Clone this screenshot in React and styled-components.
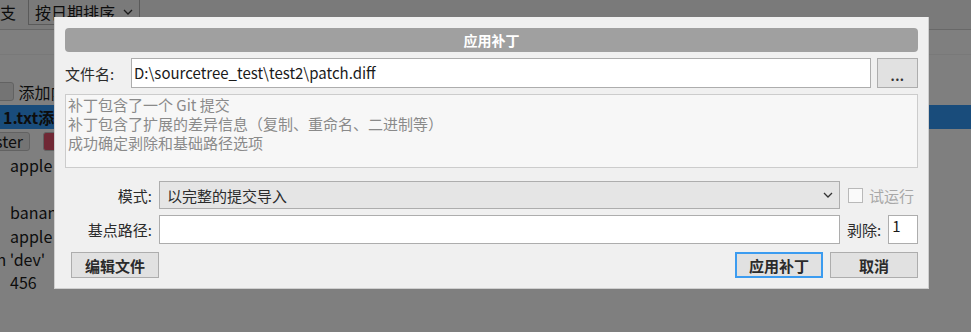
import React from 'react'
import styled, { createGlobalStyle } from 'styled-components'

const GlobalStyle = createGlobalStyle`
  html, body { margin: 0; padding: 0; background: #ffffff; }
  body { font-family: "Noto Sans CJK SC", "Noto Sans", sans-serif; }
`

const Screen = styled.div`
  position: relative;
  width: 971px;
  height: 332px;
  overflow: hidden;
  background: #ffffff;
  color: #1a1a1a;
  font-size: 16px;
`

// the app behind the modal
const Toolbar = styled.div`
  height: 29px;
  display: flex;
  align-items: flex-start;
  gap: 12px;
  background: #f4f4f4;
  border-bottom: 1px solid #d0d0d0;
  line-height: 25px;
  white-space: nowrap;
`

const SortBox = styled.div`
  margin-top: -1px;
  height: 26px;
  display: flex;
  align-items: center;
  gap: 8px;
  padding: 0 6px 0 6px;
  box-sizing: border-box;
  border: 1px solid #b4b4b4;
  background: #f4f4f4;
  white-space: nowrap;
`

const SubBar = styled.div`
  height: 24px;
  border-bottom: 1px solid #f2f2f2;
`

const List = styled.div`
  display: flex;
  flex-direction: column;
`

const Row = styled.div`
  height: ${p => p.$h || 23.6}px;
  display: flex;
  align-items: center;
  gap: 5px;
  padding-left: ${p => p.$indent || 0}px;
  background: ${p => (p.$selected ? '#3399f6' : 'transparent')};
  font-weight: ${p => (p.$selected ? 700 : 400)};
  white-space: nowrap;
`

const Pill = styled.span`
  display: inline-flex;
  align-items: center;
  height: 17px;
  padding: 0 6px 0 ${p => p.$pad || 6}px;
  margin-left: ${p => p.$offset || 0}px;
  border: 1px solid #c4c4c4;
  border-radius: 3px;
  background: ${p => p.$bg || '#e8e8e8'};
  color: #1a1a1a;
  font-size: 16px;
`

const Dim = styled.div`
  position: absolute;
  inset: 0;
  background: rgba(0, 0, 0, 0.5);
`

// modal dialog
const Dialog = styled.div`
  position: absolute;
  left: 54px;
  top: 17px;
  width: 875px;
  height: 272px;
  box-sizing: border-box;
  padding: 11px 10px 0;
  background: #f0f0f0;
  border: 1px solid #cfcfcf;
  border-top: 0;
  font-size: 15px;
  color: #2b2b2b;
  display: flex;
  flex-direction: column;
`

const TitleBar = styled.div`
  height: 24px;
  border-radius: 4px;
  background: #a0a0a0;
  color: #ffffff;
  font-weight: 700;
  font-size: 14px;
  display: flex;
  align-items: center;
  justify-content: center;
  margin-bottom: 6px;
`

const FileRow = styled.div`
  display: grid;
  grid-template-columns: 60px 1fr 41px;
  column-gap: 6px;
  height: 30px;
  align-items: center;
`

const Label = styled.span`
  font-size: 15px;
  text-align: ${p => (p.$right ? 'right' : 'left')};
  padding-right: ${p => (p.$right ? 7 : 0)}px;
  color: #2b2b2b;
  white-space: nowrap;
`

const TextField = styled.div`
  height: ${p => p.$h || 30}px;
  box-sizing: border-box;
  border: 1px solid #adadad;
  background: #ffffff;
  padding: ${p => p.$pad || '0 3px'};
  font-size: ${p => p.$size || 15}px;
  line-height: ${p => p.$lh || '28px'};
  color: #1a1a1a;
  white-space: nowrap;
  overflow: hidden;
`

const BrowseButton = styled.div`
  height: 30px;
  box-sizing: border-box;
  border: 1px solid #adadad;
  background: #e1e1e1;
  display: flex;
  justify-content: center;
  align-items: center;
  padding-top: 4px;
  font-weight: 700;
  font-size: 13px;
  letter-spacing: 0.5px;
  color: #333;
`

const InfoBox = styled.div`
  margin-top: 6px;
  height: 74px;
  box-sizing: border-box;
  border: 1px solid #cccccc;
  background: #f7f7f7;
  padding: 0 2px;
  color: #8a8a8a;
  font-size: 15px;
  line-height: 19px;
`

const FormGrid = styled.div`
  margin-top: 13px;
  display: grid;
  grid-template-columns: 94px 681px 78px;
  grid-template-rows: 28px 29px;
  row-gap: 6px;
  align-items: center;
`

const Select = styled.div`
  height: 28px;
  box-sizing: border-box;
  border: 1px solid #adadad;
  background: #e5e5e5;
  display: flex;
  align-items: center;
  justify-content: space-between;
  padding: 0 6px 0 7px;
  font-size: 15px;
  color: #2b2b2b;
`

const SideCell = styled.div`
  display: flex;
  align-items: center;
  gap: ${p => p.$gap || 6}px;
  padding-left: ${p => p.$pad || 8}px;
  height: 100%;
`

const Check = styled.span`
  width: 15px;
  height: 15px;
  box-sizing: border-box;
  border: 1px solid #b9b9b9;
  background: #fafafa;
`

const Muted = styled.span`
  color: #a8a8a8;
  font-size: 15px;
`

const ButtonRow = styled.div`
  margin-top: 8px;
  display: flex;
  align-items: center;
  padding-left: 6px;
`

const Spacer = styled.div`
  flex: 1;
`

const Button = styled.div`
  width: 88px;
  height: 26px;
  box-sizing: border-box;
  margin-left: ${p => p.$gap || 0}px;
  border: ${p => (p.$primary ? '2px solid #3c9cf0' : '1px solid #adadad')};
  background: #e1e1e1;
  display: flex;
  align-items: center;
  justify-content: center;
  font-weight: 700;
  font-size: 15px;
  color: #2b2b2b;
`

const Chevron = ({ color = '#333' }) => (
  <svg width="10" height="6" viewBox="0 0 10 6">
    <path d="M1 1 L5 5 L9 1" fill="none" stroke={color} strokeWidth="1.3" />
  </svg>
)

export default function App() {
  return (
    <Screen>
      <GlobalStyle />
      <Toolbar>
        <span>支</span>
        <SortBox>
          <span>按日期排序</span>
          <Chevron />
        </SortBox>
      </Toolbar>
      <SubBar />
      <List>
        <Row $h={25} />
        <Row $h={23} style={{ marginBottom: 2 }}>
          <Pill $offset={-6} $pad={8}>&nbsp;</Pill>
          <span>添加内</span>
        </Row>
        <Row $h={24} $selected $indent={3}>1.txt添加</Row>
        <Row $h={24}>
          <Pill $offset={-8} $pad={2}>ster</Pill>
          <Pill $offset={8} $bg="#e0506a">&nbsp;</Pill>
        </Row>
        <Row $h={23} $indent={10}>apple</Row>
        <Row $h={24} />
        <Row $h={24} $indent={10}>banana</Row>
        <Row $h={23} $indent={10}>apple</Row>
        <Row $h={23} $indent={0} style={{ marginLeft: -8 }}>in 'dev'</Row>
        <Row $h={24} $indent={10}>456</Row>
      </List>

      <Dim />

      <Dialog>
        <TitleBar>应用补丁</TitleBar>
        <FileRow>
          <Label>文件名:</Label>
          <TextField $size={15} $pad="0 2px">D:\sourcetree_test\test2\patch.diff</TextField>
          <BrowseButton>...</BrowseButton>
        </FileRow>
        <InfoBox>
          <div>补丁包含了一个 Git 提交</div>
          <div>补丁包含了扩展的差异信息（复制、重命名、二进制等）</div>
          <div>成功确定剥除和基础路径选项</div>
        </InfoBox>
        <FormGrid>
          <Label $right>模式:</Label>
          <Select>
            <span>以完整的提交导入</span>
            <Chevron />
          </Select>
          <SideCell $pad={8} $gap={6}>
            <Check />
            <Muted>试运行</Muted>
          </SideCell>

          <Label $right>基点路径:</Label>
          <TextField $h={29} />
          <SideCell $pad={7} $gap={7}>
            <Label>剥除:</Label>
            <TextField $h={29} $pad="0 3px" $lh="20px" style={{ width: 31 }}>1</TextField>
          </SideCell>
        </FormGrid>
        <ButtonRow>
          <Button>编辑文件</Button>
          <Spacer />
          <Button $primary>应用补丁</Button>
          <Button $gap={7}>取消</Button>
        </ButtonRow>
      </Dialog>
    </Screen>
  )
}
